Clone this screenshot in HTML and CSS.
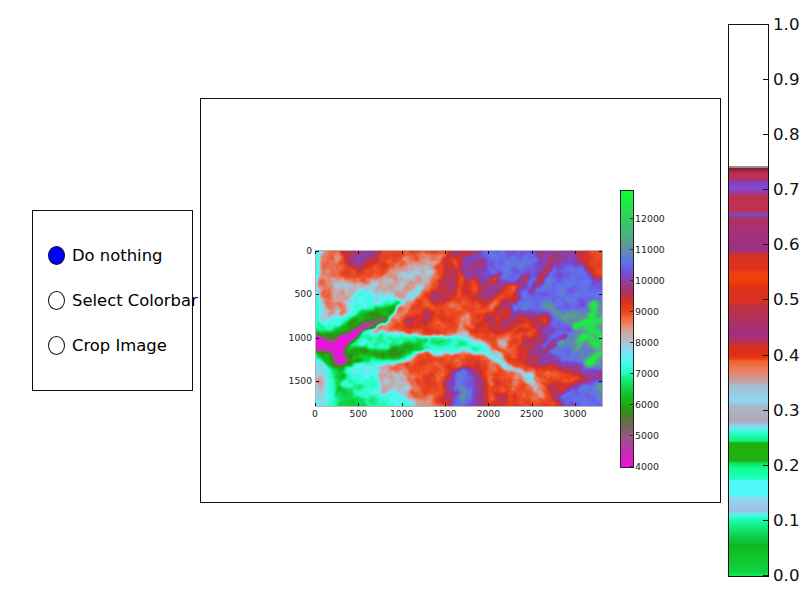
FILE: index.html
```html
<!DOCTYPE html>
<html lang="en">

<head>
    <meta charset="UTF-8">
    <title>Elevation figure</title>
    <link rel="stylesheet" href="styles.css">
</head>

<body>
    <div class="figure">

        <!-- radio buttons -->
        <div class="radio-panel">
            <div class="radio-row"><span class="radio radio-on"></span><span>Do nothing</span></div>
            <div class="radio-row"><span class="radio"></span><span>Select Colorbar</span></div>
            <div class="radio-row"><span class="radio"></span><span>Crop Image</span></div>
        </div>

        <!-- main axes, holds the image and its colorbar -->
        <div class="main-axes">
            <div class="plot">
                <div class="y-labels">
                    <span>0</span><span>500</span><span>1000</span><span>1500</span>
                </div>
                <div class="plot-col">
                    <div class="image-frame">
                        <!-- shapes are elevation in gray, the filter roughens them and applies the colormap -->
                        <svg class="terrain" viewBox="46 47 860 468" preserveAspectRatio="none">
                            <defs>
                                <filter id="rough" filterUnits="userSpaceOnUse" x="0" y="0" width="960" height="560" color-interpolation-filters="sRGB">
                                    <feTurbulence type="fractalNoise" baseFrequency="0.03" numOctaves="4" seed="7" result="noise" />
                                    <feDisplacementMap in="SourceGraphic" in2="noise" scale="28" xChannelSelector="R" yChannelSelector="G" result="moved" />
                                    <feGaussianBlur in="moved" stdDeviation="5" result="smooth" />
                                    <feColorMatrix in="noise" type="matrix" values="1 0 0 0 0  1 0 0 0 0  1 0 0 0 0  0 0 0 0 1" result="grain" />
                                    <feComposite in="smooth" in2="grain" operator="arithmetic" k1="0" k2="1" k3="0.12" k4="-0.06" result="height" />
                                    <feComponentTransfer in="height">
                                        <feFuncR type="table" tableValues=".94 .78 .63 .44 .19 .06 .06 .16 .35 .66 .88 .94 .85 .63 .47 .38 .38 .31 .19 .13 .06" />
                                        <feFuncG type="table" tableValues=".06 .16 .31 .41 .56 .75 .88 1 .96 .78 .56 .31 .19 .22 .28 .44 .56 .69 .82 .91 1" />
                                        <feFuncB type="table" tableValues=".88 .75 .56 .31 .06 .13 .38 .78 .97 .85 .5 .13 .13 .5 .82 .94 .63 .5 .38 .28 .19" />
                                    </feComponentTransfer>
                                </filter>
                            </defs>
                            <g filter="url(#rough)">
                                <rect class="lvl-orange" x="0" y="0" width="960" height="560" />

                                <!-- high ground -->
                                <path class="lvl-red" d="M430 60L470 30L860 30L880 120L960 130L960 560L770 560L752 450L860 432L780 408L700 398L640 350L680 305L745 250L650 270L600 300L520 290L505 280L530 220L500 170L430 205L395 225L395 180L430 110Z" />
                                <path class="lvl-red" d="M120 30L250 30L225 85L170 112L135 90Z" />
                                <path class="lvl-red" d="M425 560L430 440L470 400L530 385L560 430L565 560Z" />
                                <path class="lvl-red" d="M565 560L580 480L620 470L625 560Z" />
                                <path class="lvl-red" d="M310 260L350 235L400 225L395 265L340 275Z" />
                                <path class="lvl-purple" d="M485 70L540 30L810 30L850 95L880 135L960 135L960 560L800 560L765 478L875 440L840 412L780 392L715 385L690 345L725 310L755 235L660 245L610 275L660 195L600 165L570 195L545 135L500 140Z" />
                                <path class="lvl-purple" d="M150 50L240 30L225 65L170 85Z" />
                                <path class="lvl-purple" d="M445 560L445 440L480 400L520 395L545 440L540 560Z" />
                                <path class="lvl-blue" d="M535 65L560 30L700 45L720 70L690 110L650 150L610 140L570 110Z" />
                                <path class="lvl-blue" d="M700 150L760 100L800 85L850 90L875 135L960 130L960 405L880 410L815 385L750 360L720 330L760 290L750 235L690 225L640 225Z" />
                                <path class="lvl-blue" d="M805 560L780 490L880 440L960 420L960 560Z" />
                                <path class="lvl-blue" d="M460 530L460 430L490 400L515 410L520 470L515 530Z" />
                                <path class="finger-blue" d="M560 70L610 130L650 170" />
                                <path class="finger-blue" d="M690 60L700 130L640 220" />
                                <path class="finger-blue" d="M620 60L660 100" />
                                <path class="finger-red" d="M780 50L740 110L690 170" />
                                <path class="finger-red" d="M680 120L620 180L600 260" />
                                <path class="finger-red" d="M740 240L690 280L640 300" />
                                <path class="finger-red" d="M800 300L730 350" />
                                <path class="lvl-teal" d="M780 225L830 230L870 200L906 195L925 300L905 395L865 400L825 350L790 325L830 280Z" />
                                <path class="lvl-teal" d="M860 470L900 450L960 450L960 500L880 500Z" />
                                <path class="lvl-teal" d="M475 450L500 470L495 500L475 480Z" />
                                <path class="finger-teal" d="M735 188L760 230L810 262" />
                                <path class="finger-teal" d="M830 300L770 330" />
                                <path class="finger-green" d="M930 255L860 265L810 275" />
                                <path class="finger-green" d="M885 200L870 280L930 325" />
                                <path class="finger-green" d="M900 335L860 305L830 330" />
                                <path class="finger-green" d="M900 350L865 395" />

                                <!-- ridges running down to the valley -->
                                <path class="ridge" d="M520 130L525 230L475 290" />
                                <path class="ridge" d="M640 150L570 215L505 280" />
                                <path class="ridge" d="M715 285L655 300L600 310" />
                                <path class="ridge-thin" d="M450 60L480 120L470 200" />
                                <path class="ridge-thin" d="M600 120L560 150" />
                                <path class="lvl-orange" d="M862 30L940 30L940 125L895 128L875 90Z" />

                                <!-- foothills -->
                                <path class="lvl-salmon" d="M20 30L125 30L110 90L140 125L190 130L255 105L300 75L360 50L395 60L440 47L410 110L385 170L330 225L270 280L250 320L150 420L20 420Z" />
                                <path class="lvl-salmon" d="M20 400L190 400L300 385L340 420L360 470L430 520L425 560L20 560Z" />
                                <path class="lvl-salmon" d="M470 290L480 240L500 225L520 260L500 300Z" />
                                <path class="lvl-salmon" d="M570 360L560 440L580 470L590 400Z" />
                                <path class="lvl-salmon" d="M640 410L630 490L665 450Z" />
                                <path class="lvl-salmon" d="M690 440L695 500L715 500L745 440L715 425Z" />
                                <path class="lvl-salmon" d="M590 300L590 345L650 320L620 305Z" />
                                <path class="lvl-grey" d="M90 125L130 140L200 145L255 125L290 105L340 85L375 65L405 78L385 130L350 165L300 195L250 210L225 265L150 300L100 210Z" />
                                <path class="lvl-grey" d="M20 400L280 400L315 425L325 470L385 515L400 560L20 560Z" />
                                <path class="lvl-grey" d="M470 295L485 260L500 300Z" />
                                <path class="lvl-grey" d="M590 310L600 345L625 320Z" />
                                <path class="lvl-grey" d="M700 440L705 480L725 445Z" />
                                <path class="lvl-orange" d="M205 425L245 445L235 460L210 440Z" />
                                <path class="lvl-blue-light" d="M20 30L65 30L60 70L50 110L50 150L70 205L100 250L60 290L20 290Z" />
                                <path class="lvl-blue-light" d="M95 240L155 175L220 170L300 190L370 150L345 190L290 215L240 265L200 300L100 300Z" />
                                <path class="lvl-blue-light" d="M20 280L200 280L150 400L20 400Z" />
                                <path class="lvl-blue-light" d="M20 400L75 400L80 500L20 560Z" />
                                <path class="lvl-blue-light" d="M80 400L240 400L230 470L300 470L340 510L80 560Z" />
                                <path class="lvl-salmon" d="M105 205L135 205L140 240L115 250Z" />
                                <path class="lvl-grey" d="M50 430L75 430L70 475L50 470Z" />
                                <path class="lvl-blue-light" d="M370 320L500 290L590 345L640 400L700 425L710 470L660 425L600 385L540 345L380 345Z" />
                                <path class="lvl-cyan" d="M20 30L60 30L55 70L48 150L60 265L20 280Z" />
                                <path class="lvl-cyan" d="M60 265L150 235L165 170L215 170L235 245L250 250L150 330Z" />
                                <path class="lvl-cyan" d="M120 290L240 290L340 300L380 310L480 305L560 340L610 390L670 430L650 420L590 385L540 355L400 360L370 340L330 375L240 395L110 400Z" />
                                <path class="lvl-cyan" d="M75 400L230 400L240 470L320 490L345 560L75 560Z" />
                                <path class="lvl-mint" d="M40 250L60 260L75 280L140 265L210 220L260 195L300 190L260 250L160 300L220 295L320 310L385 305L480 310L555 345L500 340L390 345L330 360L280 385L150 385L130 400L200 470L250 490L265 560L90 560L100 480L85 400L60 380L40 370Z" />
                                <path class="lvl-green-light" d="M40 280L90 290L190 225L265 210L305 200L265 255L180 300L150 340L170 335L250 340L330 325L385 315L355 345L300 372L160 380L130 400L135 450L190 490L240 560L110 560L115 480L95 400L40 355Z" />
                                <path class="lvl-green-dark" d="M30 290L90 295L190 235L280 205L300 200L270 245L190 290L140 345L175 340L250 345L330 330L365 318L350 345L300 368L240 372L185 355L135 385L125 470L105 490L125 425L90 390L30 350Z" />
                                <path class="lvl-mauve" d="M30 300L100 310L175 270L265 235L235 265L180 295L135 340L125 390L190 365L180 380L135 385L105 400L90 355L30 352Z" />
                                <path class="lvl-magenta" d="M30 305L100 320L175 275L230 265L190 292L135 335L130 385L115 390L95 350L30 350Z" />
                                <path class="lvl-orange" d="M172 330L200 312L185 330Z" />
                            </g>
                        </svg>
                        <div class="x-ticks"><i></i><i></i><i></i><i></i><i></i><i></i><i></i></div>
                        <div class="x-ticks x-ticks-bottom"><i></i><i></i><i></i><i></i><i></i><i></i><i></i></div>
                        <div class="y-ticks"><i></i><i></i><i></i><i></i></div>
                        <div class="y-ticks y-ticks-right"><i></i><i></i><i></i><i></i></div>
                    </div>
                    <div class="x-labels">
                        <span>0</span><span>500</span><span>1000</span><span>1500</span><span>2000</span><span>2500</span><span>3000</span>
                    </div>
                </div>
            </div>

            <div class="mini-bar">
                <div class="mini-scale">
                    <div class="mini-tick">12000</div>
                    <div class="mini-tick">11000</div>
                    <div class="mini-tick">10000</div>
                    <div class="mini-tick">9000</div>
                    <div class="mini-tick">8000</div>
                    <div class="mini-tick">7000</div>
                    <div class="mini-tick">6000</div>
                    <div class="mini-tick">5000</div>
                    <div class="mini-tick">4000</div>
                </div>
            </div>
        </div>

        <!-- big colorbar on the right -->
        <div class="big-bar">
            <div class="big-scale">
                <div class="big-tick">1.0</div>
                <div class="big-tick">0.9</div>
                <div class="big-tick">0.8</div>
                <div class="big-tick">0.7</div>
                <div class="big-tick">0.6</div>
                <div class="big-tick">0.5</div>
                <div class="big-tick">0.4</div>
                <div class="big-tick">0.3</div>
                <div class="big-tick">0.2</div>
                <div class="big-tick">0.1</div>
                <div class="big-tick">0.0</div>
            </div>
        </div>
    </div>
</body>

</html>
```

FILE: styles.css
```css
body {
    margin: 0;
    background-color: #fff;
    font-family: "DejaVu Sans", sans-serif;
    color: #000;
}

.figure {
    position: relative;
    width: 800px;
    height: 600px;
    overflow: hidden;
}

/* axes sit on the figure canvas */
.radio-panel,
.main-axes,
.big-bar {
    position: absolute;
    box-sizing: border-box;
    border: 1px solid #111;
}

.radio-panel {
    left: 32px;
    top: 210px;
    width: 161px;
    height: 181px;
    padding: 35px 15px 0;
    display: flex;
    flex-direction: column;
    gap: 27px;
}

.radio-row {
    display: flex;
    align-items: center;
    gap: 7px;
    height: 18px;
    font-size: 16.4px;
    white-space: nowrap;
}

.radio {
    box-sizing: border-box;
    flex: none;
    width: 17px;
    height: 19px;
    border: 1px solid #111;
    border-radius: 50%;
    background-color: #fff;
}

.radio-on {
    background-color: #00f;
}

.main-axes {
    left: 200px;
    top: 98px;
    width: 521px;
    height: 405px;
}

.plot {
    position: absolute;
    left: 114px;
    top: 151px;
    display: flex;
}

.y-labels {
    position: absolute;
    right: 100%;
    top: 1px;
    height: 130px;
    margin-right: 3px;
    display: flex;
    flex-direction: column;
    justify-content: space-between;
    align-items: flex-end;
    font-size: 9.2px;
}

.y-labels span,
.x-labels span {
    height: 0;
    line-height: 0;
    color: #222;
}

.image-frame {
    position: relative;
    box-sizing: border-box;
    width: 288px;
    height: 157px;
    border: 1px solid #b4b4b4;
}

.terrain {
    display: block;
    width: 100%;
    height: 100%;
}

.x-ticks {
    position: absolute;
    left: -1px;
    top: 0;
    width: 261px;
    display: flex;
    justify-content: space-between;
}

.x-ticks i {
    width: 1px;
    height: 3px;
    background-color: #111;
}

.x-ticks-bottom {
    top: auto;
    bottom: 0;
}

.y-ticks {
    position: absolute;
    left: 0;
    top: 0;
    height: 131px;
    display: flex;
    flex-direction: column;
    justify-content: space-between;
}

.y-ticks i {
    width: 3px;
    height: 1px;
    background-color: #111;
}

.y-ticks-right {
    left: auto;
    right: 0;
}

.x-labels {
    width: 260px;
    margin-top: 7px;
    display: flex;
    justify-content: space-between;
    font-size: 9.2px;
}

.x-labels span {
    width: 0;
    display: flex;
    justify-content: center;
}

.mini-bar {
    position: absolute;
    left: 419px;
    top: 91px;
    box-sizing: border-box;
    width: 14px;
    height: 278px;
    border: 1px solid #222;
    background: linear-gradient(to top,
        #f010e0 0, #c030b0 6%, #985880 11%, #607040 17%, #309010 20%,
        #18b010 23%, #10c020 26%, #10f080 32%, #20ffc0 34%, #50f8f8 39%,
        #90d8f0 43%, #b0c0d0 45.5%, #d0a8a0 49%, #f08060 52%, #f04010 56.5%,
        #d83020 60%, #b03060 63%, #9040a0 67.5%, #7050e0 71%, #6070f0 74%,
        #6090a0 79%, #50b080 84%, #30d060 90%, #10ff30 100%);
}

.mini-scale {
    position: absolute;
    left: 9px;
    top: 27px;
    height: 248px;
    display: flex;
    flex-direction: column;
    justify-content: space-between;
}

.mini-tick {
    display: flex;
    align-items: center;
    gap: 2px;
    height: 0;
    font-size: 9.4px;
    color: #222;
}

.mini-tick::before {
    content: "";
    width: 3px;
    height: 1px;
    background-color: #333;
}

.big-bar {
    left: 728px;
    top: 24px;
    width: 41px;
    height: 553px;
    background: linear-gradient(to bottom,
        #fff 0, #fff 141px, #909090 141.5px, #909090 143px, #802030 143.5px,
        #a02040 145px, #c03050 149px, #b03060 154px, #8040c0 158px, #8848d8 163px,
        #9040b0 166px, #c03050 172px, #c03050 186px, #7050d0 190px, #b03060 193px,
        #a83078 206px, #a03080 216px, #a03080 226px, #c03040 228px, #d83020 231px,
        #e03020 244px, #f04010 248px, #f04008 256px, #e83010 261px, #d83020 266px,
        #e03020 276px, #c03040 281px, #b03060 296px, #a03080 308px, #b03060 316px,
        #d83020 321px, #e03018 331px, #f04008 334px, #f06030 336px, #e88060 346px,
        #c8a0a0 356px, #a0c0d0 361px, #90d8f0 376px, #a8b8c8 381px, #b0a8b8 396px,
        #90d0e8 400px, #60f0f0 404px, #20ffc0 409px, #10f080 416px, #20b010 418px,
        #20b010 436px, #10e060 438px, #10ff90 444px, #20ffc0 454px, #50f8f8 456px,
        #50f8f8 471px, #90d8f0 473px, #a0c0e0 486px, #60f0f0 489px, #20ffc0 494px,
        #10f080 501px, #10d050 511px, #10b820 521px, #10c020 526px, #10d040 546px,
        #10f060 552px);
}

.big-scale {
    position: absolute;
    right: -1px;
    top: -1px;
    height: 552px;
    display: flex;
    flex-direction: column;
    justify-content: space-between;
}

.big-tick {
    display: flex;
    align-items: center;
    height: 0;
    font-size: 16.67px;
    color: #111;
    width: 0;
    white-space: nowrap;
}

.big-tick::before {
    content: "";
    flex: none;
    width: 6px;
    height: 1px;
    margin-left: -6px;
    margin-right: 4px;
    background-color: #111;
}

/* terrain elevation as gray, 4000 black to 12900 white */
.lvl-magenta { fill: #000; }
.lvl-mauve { fill: #1c1c1c; }
.lvl-green-dark { fill: #383838; }
.lvl-green-light { fill: #474747; }
.lvl-mint { fill: #575757; }
.lvl-cyan { fill: #616161; }
.lvl-blue-light { fill: #6e6e6e; }
.lvl-grey { fill: #787878; }
.lvl-salmon { fill: #858585; }
.lvl-orange { fill: #8f8f8f; }
.lvl-red { fill: #9e9e9e; }
.lvl-purple { fill: #ababab; }
.lvl-blue { fill: #bdbdbd; }
.lvl-teal { fill: #ccc; }

.ridge,
.ridge-thin,
.finger-blue,
.finger-red,
.finger-teal,
.finger-green {
    fill: none;
    stroke: #8f8f8f;
    stroke-width: 22;
}

.ridge-thin {
    stroke-width: 10;
}

.finger-blue {
    stroke: #bdbdbd;
    stroke-width: 16;
}

.finger-red {
    stroke: #9e9e9e;
    stroke-width: 16;
}

.finger-teal {
    stroke: #ccc;
    stroke-width: 18;
}

.finger-green {
    stroke: #f0f0f0;
    stroke-width: 20;
}
```
